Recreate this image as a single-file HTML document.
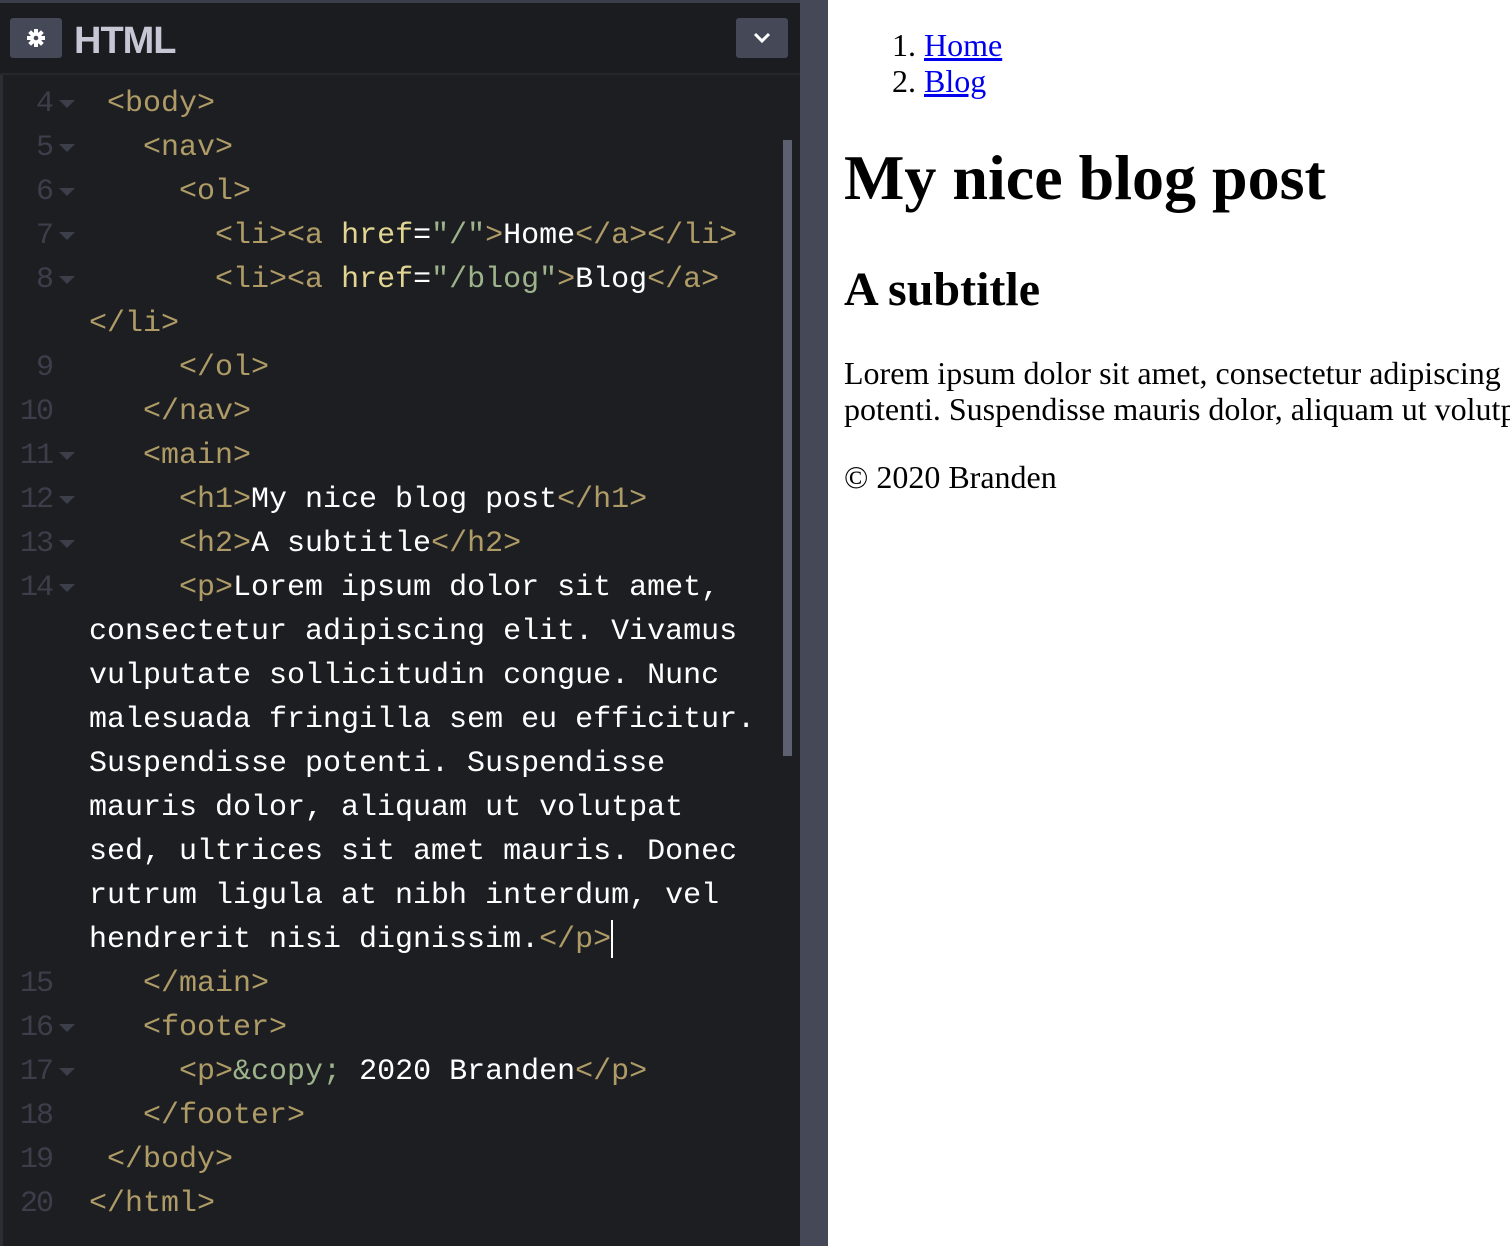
<!DOCTYPE html>
<html><head><style>
*{margin:0;padding:0}
body{width:1510px;height:1246px;background:#fff;position:relative;overflow:hidden}
#ed{position:absolute;left:0;top:0;width:800px;height:1246px;background:#1d1e22;border-left:3px solid #2c2e36;box-sizing:border-box}
#topbar{position:absolute;left:0;top:0;width:828px;height:3px;background:#3b3e4a}
#hdr{position:absolute;left:0;top:3px;width:800px;height:70px;border-bottom:2px solid #26272d;background:#1b1c20}
#gear{position:absolute;left:10px;top:18px;width:52px;height:40px;background:#444857;border-radius:3px}
#title{position:absolute;left:74px;top:20px;font:bold 38px "Liberation Sans",sans-serif;color:#c5c8d4;letter-spacing:-1px}
#dd{position:absolute;left:736px;top:18px;width:52px;height:40px;background:#444857;border-radius:3px}
#div{position:absolute;left:800px;top:0;width:28px;height:1246px;background:#444857}
#sb{position:absolute;left:783px;top:140px;width:9px;height:616px;background:#5c6070}
.r{position:absolute;left:0;height:44px;margin-top:3px;font:30px "Liberation Mono",monospace;line-height:44px;white-space:pre;color:#fff}
.n{position:absolute;left:0;width:52px;text-align:right;color:#3c3e4a;font-size:30px;letter-spacing:-2px}
.f{position:absolute;left:59px;top:18px;width:0;height:0;border-left:8px solid transparent;border-right:8px solid transparent;border-top:8px solid #3c3e4a}
.c{position:absolute;left:89px}
.t{color:#ae9b66}.a{color:#e2d591}.s{color:#9cb38b}
#pv{position:absolute;left:844px;top:0;font-family:"Liberation Serif",serif;color:#000;white-space:nowrap}
#pv div{position:absolute;left:0}
a{color:#0000ee}
</style></head><body>
<div id="ed"></div><div id="topbar"></div>
<div id="hdr"></div>
<div id="gear"><svg width="52" height="40" viewBox="0 0 52 40"><g transform="translate(26 20)" fill="#fff"><circle r="6"/><rect x="-2" y="-9" width="4" height="18"/><rect x="-9" y="-2" width="18" height="4"/><rect x="-2" y="-9" width="4" height="18" transform="rotate(45)"/><rect x="-2" y="-9" width="4" height="18" transform="rotate(-45)"/><circle r="2.3" fill="#444857"/></g></svg></div>
<div id="title">HTML</div>
<div id="dd"><svg width="52" height="40"><path d="M19 16 L26 23 L33 16" stroke="#fff" stroke-width="3" fill="none"/></svg></div>
<div id="div"></div>
<div id="sb"></div>

<div class="r" style="top:79px"><span class="n">4</span><span class="f"></span><span class="c"> <span class="t">&lt;body&gt;</span></span></div>
<div class="r" style="top:123px"><span class="n">5</span><span class="f"></span><span class="c">   <span class="t">&lt;nav&gt;</span></span></div>
<div class="r" style="top:167px"><span class="n">6</span><span class="f"></span><span class="c">     <span class="t">&lt;ol&gt;</span></span></div>
<div class="r" style="top:211px"><span class="n">7</span><span class="f"></span><span class="c">       <span class="t">&lt;li&gt;&lt;a </span><span class="a">href</span>=<span class="s">"/"</span><span class="t">&gt;</span>Home<span class="t">&lt;/a&gt;&lt;/li&gt;</span></span></div>
<div class="r" style="top:255px"><span class="n">8</span><span class="f"></span><span class="c">       <span class="t">&lt;li&gt;&lt;a </span><span class="a">href</span>=<span class="s">"/blog"</span><span class="t">&gt;</span>Blog<span class="t">&lt;/a&gt;</span></span></div>
<div class="r" style="top:299px"><span class="c"><span class="t">&lt;/li&gt;</span></span></div>
<div class="r" style="top:343px"><span class="n">9</span><span class="c">     <span class="t">&lt;/ol&gt;</span></span></div>
<div class="r" style="top:387px"><span class="n">10</span><span class="c">   <span class="t">&lt;/nav&gt;</span></span></div>
<div class="r" style="top:431px"><span class="n">11</span><span class="f"></span><span class="c">   <span class="t">&lt;main&gt;</span></span></div>
<div class="r" style="top:475px"><span class="n">12</span><span class="f"></span><span class="c">     <span class="t">&lt;h1&gt;</span>My nice blog post<span class="t">&lt;/h1&gt;</span></span></div>
<div class="r" style="top:519px"><span class="n">13</span><span class="f"></span><span class="c">     <span class="t">&lt;h2&gt;</span>A subtitle<span class="t">&lt;/h2&gt;</span></span></div>
<div class="r" style="top:563px"><span class="n">14</span><span class="f"></span><span class="c">     <span class="t">&lt;p&gt;</span>Lorem ipsum dolor sit amet,</span></div>
<div class="r" style="top:607px"><span class="c">consectetur adipiscing elit. Vivamus</span></div>
<div class="r" style="top:651px"><span class="c">vulputate sollicitudin congue. Nunc</span></div>
<div class="r" style="top:695px"><span class="c">malesuada fringilla sem eu efficitur.</span></div>
<div class="r" style="top:739px"><span class="c">Suspendisse potenti. Suspendisse</span></div>
<div class="r" style="top:783px"><span class="c">mauris dolor, aliquam ut volutpat</span></div>
<div class="r" style="top:827px"><span class="c">sed, ultrices sit amet mauris. Donec</span></div>
<div class="r" style="top:871px"><span class="c">rutrum ligula at nibh interdum, vel</span></div>
<div class="r" style="top:915px"><span class="c">hendrerit nisi dignissim.<span class="t">&lt;/p&gt;</span><span style="display:inline-block;width:2px;height:38px;background:#fff;vertical-align:middle"></span></span></div>
<div class="r" style="top:959px"><span class="n">15</span><span class="c">   <span class="t">&lt;/main&gt;</span></span></div>
<div class="r" style="top:1003px"><span class="n">16</span><span class="f"></span><span class="c">   <span class="t">&lt;footer&gt;</span></span></div>
<div class="r" style="top:1047px"><span class="n">17</span><span class="f"></span><span class="c">     <span class="t">&lt;p&gt;</span><span class="s">&amp;copy;</span> 2020 Branden<span class="t">&lt;/p&gt;</span></span></div>
<div class="r" style="top:1091px"><span class="n">18</span><span class="c">   <span class="t">&lt;/footer&gt;</span></span></div>
<div class="r" style="top:1135px"><span class="n">19</span><span class="c"> <span class="t">&lt;/body&gt;</span></span></div>
<div class="r" style="top:1179px"><span class="n">20</span><span class="c"><span class="t">&lt;/html&gt;</span></span></div>

<div id="pv">
<div style="top:27px;left:48px;font-size:32px;line-height:36px">1. <a href="#">Home</a></div>
<div style="top:63px;left:48px;font-size:32px;line-height:36px">2. <a href="#">Blog</a></div>
<div style="top:141px;font-size:64px;font-weight:bold;line-height:74px">My nice blog post</div>
<div style="top:262px;font-size:48px;font-weight:bold;line-height:55px">A subtitle</div>
<div style="top:355px;font-size:32px;line-height:36px">Lorem ipsum dolor sit amet, consectetur adipiscing elit.<br>potenti. Suspendisse mauris dolor, aliquam ut volutpat</div>
<div style="top:459px;font-size:32px;line-height:36px">© 2020 Branden</div>
</div>
</body></html>
